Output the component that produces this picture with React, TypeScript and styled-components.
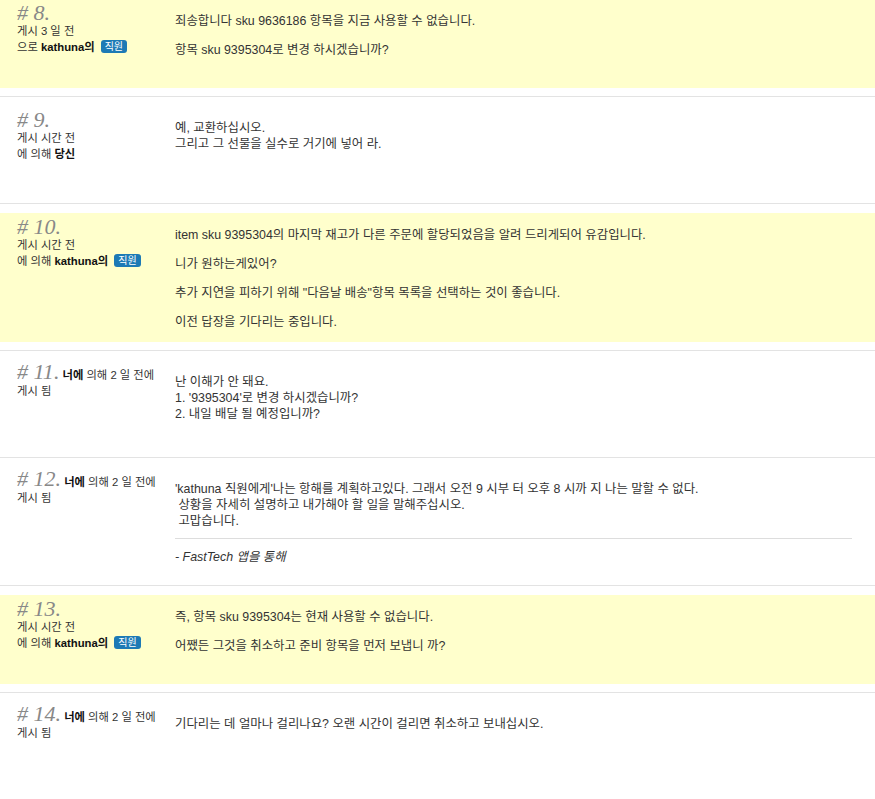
import styled, { createGlobalStyle } from "styled-components";

const GlobalStyle = createGlobalStyle`
  body {
    margin: 0;
    background: #fff;
    font-family: "Liberation Sans", "Noto Sans CJK KR", sans-serif;
    color: #333;
  }
`;

const Thread = styled.ul`
  list-style: none;
  margin: -1px 0 0;
  padding: 0;
`;

const Item = styled.li`
  padding: 9px 0 8px;
  border-bottom: 1px solid #e3e3e3;

  &:first-child {
    padding-top: 0;
  }
`;

const Box = styled.div<{ $staff?: boolean }>`
  display: flex;
  min-height: 89px;
  background: ${(p) => (p.$staff ? "#ffffcc" : "transparent")};
`;

const Meta = styled.div`
  flex: 0 0 175px;
  box-sizing: border-box;
  padding: 1px 6px 0 17px;
  font-size: 11.3px;
  line-height: 16px;
  color: #333;

  b {
    color: #111;
  }
`;

const Num = styled.span<{ $inline?: boolean }>`
  display: ${(p) => (p.$inline ? "inline" : "block")};
  padding-top: ${(p) => (p.$inline ? "0" : "3px")};
  font-family: "Liberation Serif", "DejaVu Serif", serif;
  font-style: italic;
  font-size: 22px;
  line-height: ${(p) => (p.$inline ? "22px" : "20px")};
  color: #888;
`;

const MetaLine = styled.div`
  white-space: nowrap;
`;

const Badge = styled.span`
  display: inline-block;
  margin-left: 6px;
  padding: 0 4px;
  border-radius: 3px;
  background: #1d7ab5;
  color: #fff;
  font-size: 10px;
  line-height: 13px;
  vertical-align: 1px;
`;

const Body = styled.div`
  flex: 1;
  padding: 14px 23px 12px 0;
  font-size: 12.4px;
  line-height: 16px;

  p {
    margin: 0 0 13px;
  }

  p:last-child {
    margin-bottom: 0;
  }
`;

const Divider = styled.hr`
  border: 0;
  border-top: 1px solid #ddd;
  margin: -4px 0 10px;
`;

const Signature = styled.p`
  font-style: italic;
`;

type Post = {
  num: number;
  staff?: boolean;
  inline?: boolean;
  meta: React.ReactNode;
  body: React.ReactNode;
};

const staffMeta = (time: string, prefix: string) => (
  <>
    <MetaLine>{time}</MetaLine>
    <MetaLine>
      {prefix} <b>kathuna의</b>
      <Badge>직원</Badge>
    </MetaLine>
  </>
);

const youMeta = (
  <>
    <b>너에</b> 의해 2 일 전에
    <br />
    게시 됨
  </>
);

const POSTS: Post[] = [
  {
    num: 8,
    staff: true,
    meta: staffMeta("게시 3 일 전", "으로"),
    body: (
      <>
        <p>죄송합니다 sku 9636186 항목을 지금 사용할 수 없습니다.</p>
        <p>항목 sku 9395304로 변경 하시겠습니까?</p>
      </>
    ),
  },
  {
    num: 9,
    meta: (
      <>
        <MetaLine>게시 시간 전</MetaLine>
        <MetaLine>
          에 의해 <b>당신</b>
        </MetaLine>
      </>
    ),
    body: (
      <p>
        예, 교환하십시오.
        <br />
        그리고 그 선물을 실수로 거기에 넣어 라.
      </p>
    ),
  },
  {
    num: 10,
    staff: true,
    meta: staffMeta("게시 시간 전", "에 의해"),
    body: (
      <>
        <p>item sku 9395304의 마지막 재고가 다른 주문에 할당되었음을 알려 드리게되어 유감입니다.</p>
        <p>니가 원하는게있어?</p>
        <p>추가 지연을 피하기 위해 "다음날 배송"항목 목록을 선택하는 것이 좋습니다.</p>
        <p>이전 답장을 기다리는 중입니다.</p>
      </>
    ),
  },
  {
    num: 11,
    inline: true,
    meta: youMeta,
    body: (
      <p>
        난 이해가 안 돼요.
        <br />
        1. '9395304'로 변경 하시겠습니까?
        <br />
        2. 내일 배달 될 예정입니까?
      </p>
    ),
  },
  {
    num: 12,
    inline: true,
    meta: youMeta,
    body: (
      <>
        <p>
          'kathuna 직원에게'나는 항해를 계획하고있다. 그래서 오전 9 시부 터 오후 8 시까 지 나는 말할 수 없다.
          <br />
          {"\u00a0"}상황을 자세히 설명하고 내가해야 할 일을 말해주십시오.
          <br />
          {"\u00a0"}고맙습니다.
        </p>
        <Divider />
        <Signature>- FastTech 앱을 통해</Signature>
      </>
    ),
  },
  {
    num: 13,
    staff: true,
    meta: staffMeta("게시 시간 전", "에 의해"),
    body: (
      <>
        <p>즉, 항목 sku 9395304는 현재 사용할 수 없습니다.</p>
        <p>어쨌든 그것을 취소하고 준비 항목을 먼저 보냅니 까?</p>
      </>
    ),
  },
  {
    num: 14,
    inline: true,
    meta: youMeta,
    body: <p>기다리는 데 얼마나 걸리나요? 오랜 시간이 걸리면 취소하고 보내십시오.</p>,
  },
];

export default function App() {
  return (
    <>
      <GlobalStyle />
      <Thread>
        {POSTS.map((post) => (
          <Item key={post.num}>
            <Box $staff={post.staff}>
              <Meta>
                <Num $inline={post.inline}># {post.num}.</Num>
                {post.inline && " "}
                {post.meta}
              </Meta>
              <Body>{post.body}</Body>
            </Box>
          </Item>
        ))}
      </Thread>
    </>
  );
}
